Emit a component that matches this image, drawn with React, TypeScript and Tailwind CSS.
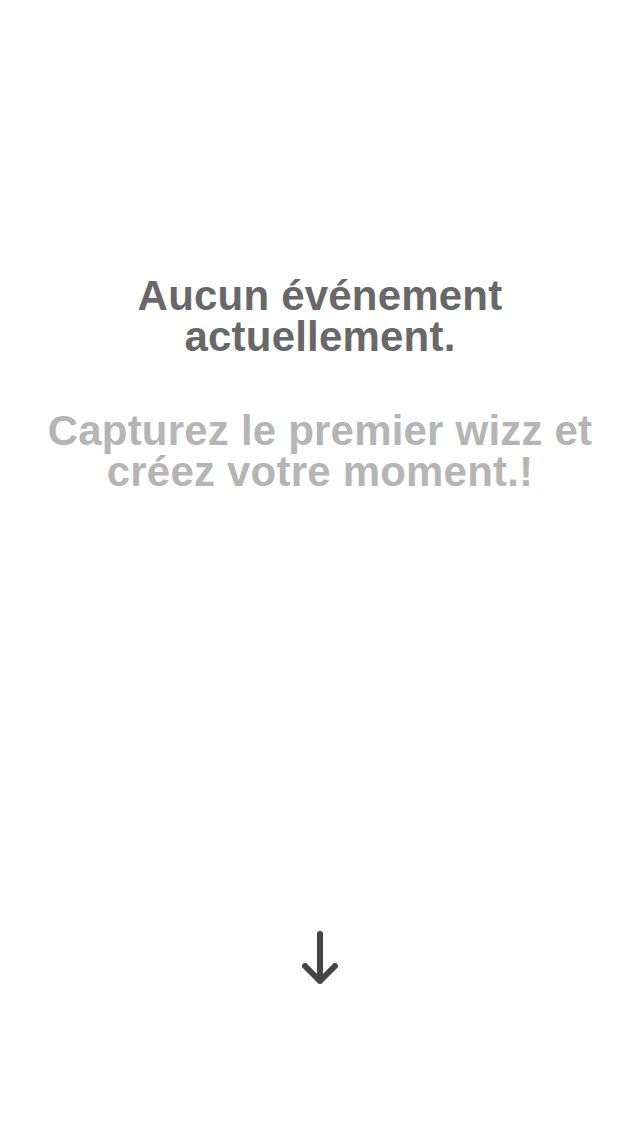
export default function App() {
  return (
    <div
      className="flex h-[1136px] w-full flex-col items-center bg-white"
      style={{ fontFamily: '"Liberation Sans", Arial, sans-serif' }}
    >
      <h1 className="mt-[275px] text-center text-[42px] font-bold leading-[41px] tracking-[0.2px] text-[#686868]">
        Aucun événement
        <br />
        actuellement.
      </h1>
      <p className="mt-[53px] text-center text-[42px] font-bold leading-[41px] tracking-[0.2px] text-[#b5b5b5]">
        Capturez le premier wizz et
        <br />
        créez votre moment.!
      </p>
      <div className="mt-auto mb-[148px] flex justify-center">
        <svg width="40" height="58" viewBox="0 0 40 58" fill="none">
          <path
            d="M20 4 V51 M5 36 L20 51 L35 36"
            stroke="#444444"
            strokeWidth="6"
            strokeLinecap="round"
            strokeLinejoin="round"
          />
        </svg>
      </div>
    </div>
  );
}
